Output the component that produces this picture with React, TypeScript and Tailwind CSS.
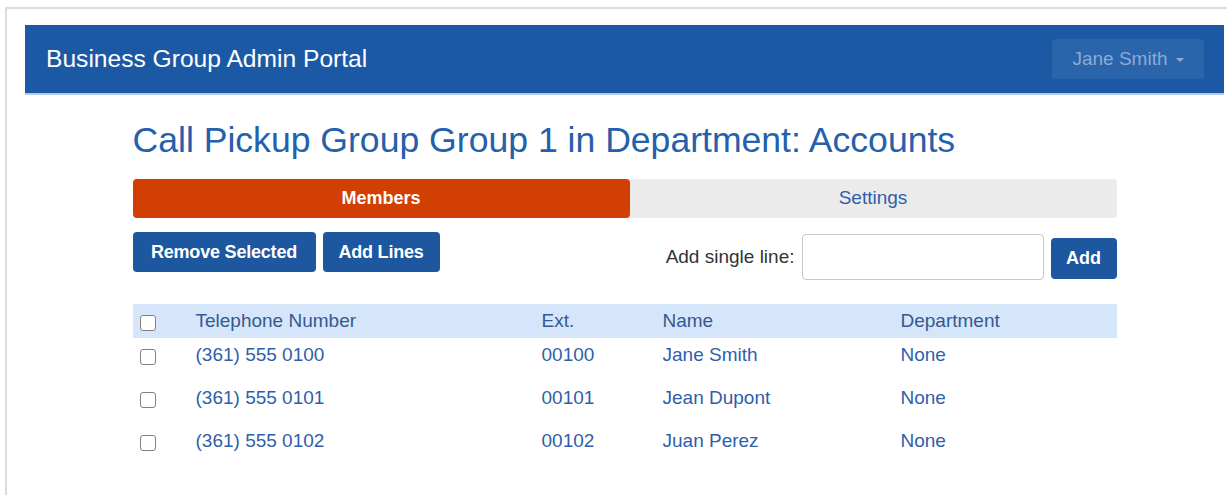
import { useState } from "react";

const members = [
  { phone: "(361) 555 0100", ext: "00100", name: "Jane Smith", dept: "None" },
  { phone: "(361) 555 0101", ext: "00101", name: "Jean Dupont", dept: "None" },
  { phone: "(361) 555 0102", ext: "00102", name: "Juan Perez", dept: "None" },
];

function Box({ checked, onClick }: { checked: boolean; onClick: () => void }) {
  return (
    <span
      onClick={onClick}
      className="flex w-[16px] h-[16px] rounded-[3px] border-[1.5px] border-[#808080] bg-white cursor-pointer items-center justify-center text-[11px] leading-none text-[#333]"
    >
      {checked ? "✓" : ""}
    </span>
  );
}

export default function App() {
  const [tab, setTab] = useState("members");
  const [picked, setPicked] = useState<boolean[]>([false, false, false]);
  const [line, setLine] = useState("");

  const allPicked = picked.every(Boolean);

  return (
    <div className="w-[1227px] h-[495px] overflow-hidden bg-white font-['Liberation_Sans',Arial,sans-serif]">
      <div className="ml-[5px] mt-[7px] w-[1237px] h-[500px] border-l-2 border-t-2 border-[#dcdcdc] pl-[18px] pr-[18px] pt-[16px]">
        <header className="h-[70px] bg-[#1c59a4] border-b-2 border-[#b4cae5] flex items-center justify-between pl-[21px] pr-[20px]">
          <span className="text-white text-[24.6px] leading-none">Business Group Admin Portal</span>
          <button className="w-[152px] h-[40px] rounded-[4px] bg-[#2a64ab] text-[#8eaad3] text-[19px] flex items-center justify-center gap-[8px]">
            Jane Smith
            <span className="w-0 h-0 border-l-[4px] border-r-[4px] border-t-[4px] border-l-transparent border-r-transparent border-t-[#8eaad3] mt-[2px]" />
          </button>
        </header>

        <div className="w-[984px] mx-auto">
          <h1 className="mt-[25px] text-[35.6px] leading-[40px] text-[#2460ab]">
            Call Pickup Group Group 1 in Department: Accounts
          </h1>

          <div className="mt-[19px] h-[39px] flex rounded-[4px] bg-[#ebebeb]">
            <button
              onClick={() => setTab("members")}
              className={
                tab === "members"
                  ? "w-[497px] rounded-[4px] bg-[#d13f02] text-white font-bold text-[18px]"
                  : "w-[497px] rounded-[4px] text-[#2f5faa] text-[19px]"
              }
            >
              Members
            </button>
            <button
              onClick={() => setTab("settings")}
              className={
                tab === "settings"
                  ? "flex-1 rounded-[4px] bg-[#d13f02] text-white font-bold text-[18px]"
                  : "flex-1 rounded-[4px] text-[#2f5faa] text-[19px]"
              }
            >
              Settings
            </button>
          </div>

          <div className="mt-[14px] flex justify-between items-start">
            <div className="flex gap-[7px]">
              <button className="w-[183px] h-[40px] rounded-[4px] bg-[#1c57a0] text-white font-bold text-[18px] tracking-[-0.2px]">
                Remove Selected
              </button>
              <button className="w-[117px] h-[40px] rounded-[4px] bg-[#1c57a0] text-white font-bold text-[18px] tracking-[-0.2px]">
                Add Lines
              </button>
            </div>
            <div className="mt-[2px] flex items-center">
              <label className="text-[19px] text-[#333] mr-[7px]">Add single line:</label>
              <input
                value={line}
                onChange={(e) => setLine(e.target.value)}
                className="w-[242px] h-[46px] rounded-[4px] border border-[#c8c8c8] px-2 text-[18px] outline-none"
              />
              <button className="ml-[7px] mt-[3px] w-[66px] h-[41px] rounded-[4px] bg-[#1c57a0] text-white font-bold text-[18px]">
                Add
              </button>
            </div>
          </div>

          <div className="mt-[24px]">
            <div className="h-[34px] bg-[#d5e6fa] grid grid-cols-[63px_346px_121px_238px_1fr] items-center text-[19px] text-[#35598f]">
              <span className="pl-[7px] pt-[4px]">
                <Box
                  checked={allPicked}
                  onClick={() => setPicked(picked.map(() => !allPicked))}
                />
              </span>
              <span>Telephone Number</span>
              <span>Ext.</span>
              <span>Name</span>
              <span>Department</span>
            </div>
            {members.map((m, i) => (
              <div
                key={m.ext}
                className="h-[43px] pt-[6px] grid grid-cols-[63px_346px_121px_238px_1fr] items-start text-[19px] leading-[22px] text-[#2f5faa]"
              >
                <span className="pl-[7px] pt-[5px]">
                  <Box
                    checked={picked[i]}
                    onClick={() => setPicked(picked.map((p, j) => (j === i ? !p : p)))}
                  />
                </span>
                <span>{m.phone}</span>
                <span>{m.ext}</span>
                <span>{m.name}</span>
                <span>{m.dept}</span>
              </div>
            ))}
          </div>
        </div>
      </div>
    </div>
  );
}
